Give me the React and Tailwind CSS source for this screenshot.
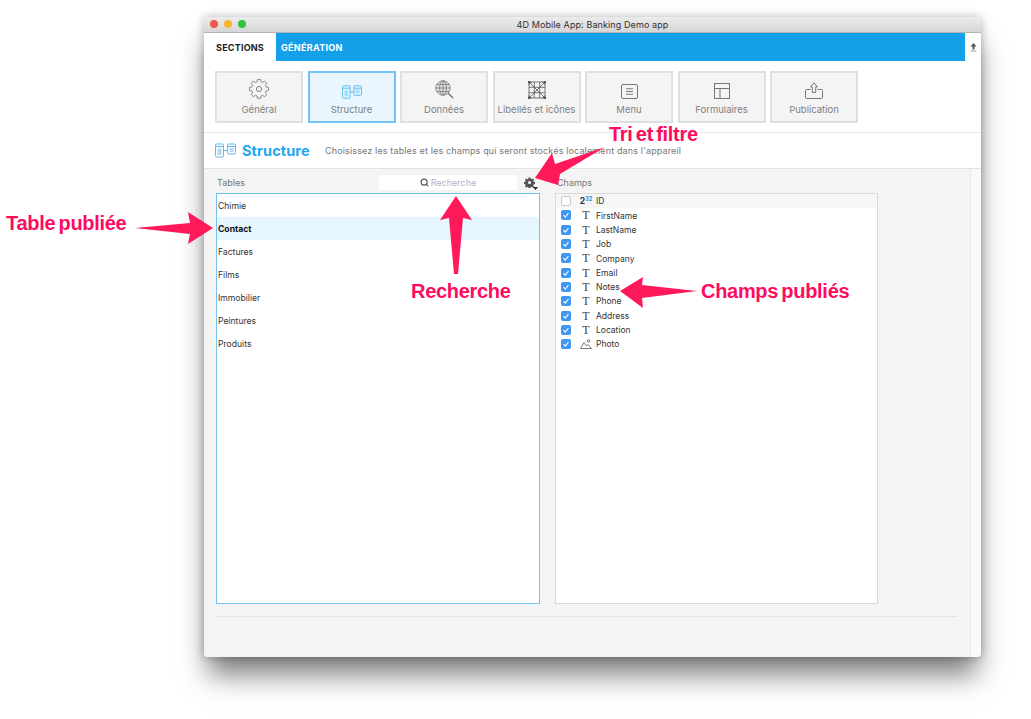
import { Search } from 'lucide-react'

const UI_FONT = 'font-["Inter","Noto_Sans",sans-serif]'

const TABLES = ['Chimie', 'Contact', 'Factures', 'Films', 'Immobilier', 'Peintures', 'Produits']
const FIELDS = ['FirstName', 'LastName', 'Job', 'Company', 'Email', 'Notes', 'Phone', 'Address', 'Location']

function GearIcon() {
  return (
    <svg width="20" height="20" viewBox="0 0 20 20" fill="none" stroke="#777" strokeWidth="0.9">
      <path d="M8.4 1h3.2l.5 2.5 1.5.7 2.2-1.4 2.2 2.3-1.4 2.1.7 1.6 2.5.5v3.2l-2.5.5-.7 1.5 1.4 2.2-2.2 2.2-2.2-1.4-1.5.7-.5 2.3H8.4l-.5-2.4-1.5-.7-2.2 1.4L2 16.7l1.4-2.2-.7-1.5L.2 12.5V9.3l2.5-.5.7-1.6L2 5.1l2.2-2.3 2.2 1.4 1.5-.7z" transform="translate(0.3 -0.6) scale(0.97)" />
      <circle cx="10" cy="10" r="2.6" />
    </svg>
  )
}

function StructureIcon({ size = 20, h = 14 }) {
  return (
    <svg width={size} height={h} viewBox="0 0 21 14" fill="none" stroke="#5cb8ee" strokeWidth="1">
      <rect x="0.5" y="0.5" width="8" height="13" rx="1.2" />
      <rect x="12.5" y="0.5" width="8" height="10" rx="1.2" />
      <path d="M.5 3h8M12.5 3h8M8.5 7h4" />
      <rect x="2.5" y="5" width="4" height="6.5" fill="#a9dcf8" stroke="none" />
      <rect x="14.5" y="4.5" width="4" height="4" fill="#a9dcf8" stroke="none" />
    </svg>
  )
}

function GlobeIcon() {
  return (
    <svg width="19" height="19" viewBox="0 0 19 19" fill="none" stroke="#777" strokeWidth="0.8">
      <circle cx="8" cy="8" r="7.2" fill="#e2e2e2" />
      <ellipse cx="8" cy="8" rx="3.4" ry="7.2" />
      <path d="M8 .8v14.4M.8 8h14.4M1.8 4.5h12.4M1.8 11.5h12.4" />
      <path d="M13 13l5 5" strokeWidth="1.4" />
    </svg>
  )
}

function LabelsIcon() {
  return (
    <svg width="18" height="18" viewBox="0 0 18 18" fill="none" stroke="#555" strokeWidth="0.8">
      <rect x="1" y="1" width="16" height="16" />
      <path d="M1 6.3h16M1 11.7h16M6.3 1v16M11.7 1v16M1 1l16 16M17 1L1 17M3.6 1L1 3.6M14.4 1L17 3.6M1 14.4L3.6 17M17 14.4L14.4 17" />
      <rect x="0" y="0" width="2" height="2" fill="#555" />
      <rect x="16" y="0" width="2" height="2" fill="#555" />
      <rect x="0" y="16" width="2" height="2" fill="#555" />
      <rect x="16" y="16" width="2" height="2" fill="#555" />
    </svg>
  )
}

function MenuIcon() {
  return (
    <svg width="17" height="15" viewBox="0 0 17 15" fill="none" stroke="#777" strokeWidth="1">
      <rect x="0.5" y="0.5" width="16" height="14" rx="1.5" />
      <path d="M5 4.8h7M5 7.5h7M5 10.2h7" />
    </svg>
  )
}

function FormsIcon() {
  return (
    <svg width="16" height="16" viewBox="0 0 16 16" fill="none" stroke="#777" strokeWidth="1">
      <rect x="0.5" y="0.5" width="15" height="15" />
      <path d="M.5 5.5h15M6 5.5v10" />
    </svg>
  )
}

function PublishIcon() {
  return (
    <svg width="18" height="17" viewBox="0 0 18 17" fill="none" stroke="#777" strokeWidth="1">
      <path d="M5.5 7.5H1.500a1 1 0 0 0-1 1v7a1 1 0 0 0 1 1h15a1 1 0 0 0 1-1v-7a1 1 0 0 0-1-1h-4" />
      <path d="M9 .8L5.500 5H7.300v5.500h3.400V5h1.800z" />
    </svg>
  )
}

const SECTIONS = [
  { label: 'Général', icon: <GearIcon /> },
  { label: 'Structure', icon: <StructureIcon />, active: true },
  { label: 'Données', icon: <GlobeIcon /> },
  { label: 'Libellés et icônes', icon: <LabelsIcon /> },
  { label: 'Menu', icon: <MenuIcon /> },
  { label: 'Formulaires', icon: <FormsIcon /> },
  { label: 'Publication', icon: <PublishIcon /> },
]

function SectionButton({ label, icon, active }) {
  return (
    <div
      className={
        active
          ? 'flex h-[52px] w-[88px] flex-col items-center border-2 border-[#74c2f5] bg-[#e9f6fe]'
          : 'flex h-[52px] w-[88px] flex-col items-center border-2 border-[#e0e0e0] bg-[#f4f4f4]'
      }
    >
      <div className="flex h-[26px] w-full items-end justify-center">{icon}</div>
      <div className="mt-[5px] text-[9.5px] leading-[11px] whitespace-nowrap text-[#808080]">{label}</div>
    </div>
  )
}

function Check({ checked }) {
  if (!checked) {
    return <div className="h-[10px] w-[10px] rounded-[2px] border border-[#c8c8c8] bg-white" />
  }
  return (
    <div className="flex h-[10px] w-[10px] items-center justify-center rounded-[2px] bg-[#3c97f5]">
      <svg width="8" height="8" viewBox="0 0 8 8" fill="none" stroke="#fff" strokeWidth="1.2">
        <path d="M1.5 4.2l1.8 1.8 3.2-4" />
      </svg>
    </div>
  )
}

function FieldRow({ name, checked = true, icon, className = '' }) {
  return (
    <div className={`flex h-[14.3px] items-center ${className}`}>
      <div className="ml-[5px] w-[10px]">
        <Check checked={checked} />
      </div>
      <div className="ml-[5px] flex w-[20px] justify-center">{icon}</div>
      <div className="pt-[1px] text-[8.5px] leading-none text-[#333]">{name}</div>
    </div>
  )
}

function PhotoIcon() {
  return (
    <svg width="12" height="10" viewBox="0 0 12 10" fill="none" stroke="#444" strokeWidth="0.7">
      <path d="M.5 9.500L4 3.500l2.500 3.500 1.500-1.500 3.500 4z" />
      <circle cx="8.500" cy="2" r="1.300" />
    </svg>
  )
}

// the pink callouts drawn on top of the window
function Arrows() {
  return (
    <svg className="pointer-events-none absolute top-0 left-0" width="1031" height="719" fill="#fe1a5a">
      <polygon points="135,228 190,223 188,212 213,228 188,244 190,234" />
      <polygon points="605,147 560,174 558,185 535,178 552,153 555,164" />
      <polygon points="456,196 472,220 463,218 458,274 454,274 449,218 440,220" />
      <polygon points="620,291 643,277 642,285 697,291 642,298 643,308" />
    </svg>
  )
}

function Callout({ className, children }) {
  return (
    <div className={`absolute font-["Liberation_Sans",sans-serif] text-[20px] leading-[22px] font-bold tracking-[-0.3px] whitespace-nowrap text-[#fe0a5e] [word-spacing:-2px] ${className}`}>
      {children}
    </div>
  )
}

export default function App() {
  return (
    <div className={`relative h-[719px] w-[1031px] overflow-hidden bg-white pt-[17px] pl-[204px] ${UI_FONT}`}>
      <div className="flex h-[640px] w-[777px] flex-col overflow-hidden rounded-[4px] bg-white shadow-[0_22px_26px_-4px_rgba(0,0,0,0.5),0_0_10px_rgba(0,0,0,0.28)]">
        <div className="relative flex h-[16px] shrink-0 items-center justify-center border-b border-[#b4b4b4] bg-gradient-to-b from-[#ececec] to-[#d6d6d6] text-[9px] tracking-[0.1px] text-[#333]">
          <div className="absolute top-[3px] left-[6px] flex gap-[6px]">
            <div className="h-[8px] w-[8px] rounded-full bg-[#f0564c]" />
            <div className="h-[8px] w-[8px] rounded-full bg-[#f6b72d]" />
            <div className="h-[8px] w-[8px] rounded-full bg-[#2fc23f]" />
          </div>
          4D Mobile App: Banking Demo app
        </div>

        <div className="flex h-[28px] shrink-0">
          <div className="flex w-[72px] items-center justify-center pt-[1px] text-[9px] font-bold tracking-[0.2px] text-[#222]">SECTIONS</div>
          <div className="flex w-[689px] items-center bg-[#149fe9] pt-[1px] pl-[5px] text-[9px] font-bold tracking-[0.3px] text-white">GÉNÉRATION</div>
          <div className="flex flex-1 items-center justify-center">
            <svg width="7" height="9" viewBox="0 0 7 9" fill="#555">
              <path d="M3.500 0L6.500 3.500H4.500V6.500H2.500V3.500H.5z" />
              <rect x="0.5" y="7.500" width="6" height="1" fill="#999" />
            </svg>
          </div>
        </div>

        <div className="flex h-[72px] shrink-0 gap-[4.5px] border-b border-[#e8e8e8] pt-[10px] pl-[11px]">
          {SECTIONS.map((section) => (
            <SectionButton key={section.label} {...section} />
          ))}
        </div>

        <div className="flex h-[36px] shrink-0 items-center border-b border-[#e2e2e2] pl-[11px]">
          <StructureIcon size={21} h={15} />
          <div className="ml-[6px] w-[83px] text-[14.5px] font-bold tracking-[0.1px] text-[#1ea7f2]">Structure</div>
          <div className="text-[9px] tracking-[0.14px] text-[#777]">Choisissez les tables et les champs qui seront stockés localement dans l'appareil</div>
        </div>

        <div className="flex flex-1 bg-[#f4f4f4]">
          <div className="w-[766px] pl-[12px]">
            <div className="flex h-[24px] items-end pb-[3px]">
              <div className="flex w-[324px] items-center justify-between">
                <div className="pl-[1px] text-[9px] leading-[14px] text-[#777]">Tables</div>
                <div className="flex items-center">
                  <div className="flex h-[15px] w-[138px] items-center justify-center gap-[2px] rounded-[3px] bg-white text-[9px] text-[#b5aec6]">
                    <Search size={9} strokeWidth={3} color="#555" />
                    Recherche
                  </div>
                  <div className="relative mr-[2px] ml-[7px] h-[14px] w-[14px] pt-[1px]">
                    <svg width="11" height="11" viewBox="0 0 24 24" fill="#555">
                      <path d="M10 1h4l.6 3 2 .9 2.600-1.700 2.800 2.800-1.700 2.600.9 2 3 .6v4l-3 .6-.9 2 1.700 2.600-2.800 2.800-2.600-1.700-2 .9-.6 3h-4l-.6-3-2-.9-2.600 1.700-2.800-2.800 1.700-2.600-.9-2-3-.6v-4l3-.6.9-2-1.700-2.600L4.800 3.200l2.600 1.700 2-.9zM12 8.500a3.500 3.500 0 1 0 0 7 3.500 3.500 0 0 0 0-7z" fillRule="evenodd" />
                    </svg>
                    <svg className="absolute right-0 bottom-0" width="5" height="3" viewBox="0 0 5 3" fill="#222">
                      <path d="M0 0h5L2.500 3z" />
                    </svg>
                  </div>
                </div>
              </div>
              <div className="ml-[17px] text-[9px] leading-[14px] text-[#777]">Champs</div>
            </div>

            <div className="flex h-[411px] gap-[15px]">
              <div className="w-[324px] border border-[#74c2f5] bg-white">
                {TABLES.map((name) => (
                  <div
                    key={name}
                    className={
                      name === 'Contact'
                        ? 'flex h-[23px] items-center bg-[#e6f6fe] pt-[1px] pl-[1px] text-[8.6px] font-bold text-[#111]'
                        : 'flex h-[23px] items-center pt-[1px] pl-[1px] text-[8.6px] text-[#333]'
                    }
                  >
                    {name}
                  </div>
                ))}
              </div>

              <div className="w-[323px] border border-[#d8d8d8] bg-white">
                <FieldRow
                  name="ID"
                  checked={false}
                  className="bg-[#f6f6f6]"
                  icon={
                    <span className="text-[8.6px] leading-none font-bold text-[#333]">
                      2<sup className="text-[5.5px] text-[#2a8fd0]">32</sup>
                    </span>
                  }
                />
                {FIELDS.map((name) => (
                  <FieldRow
                    key={name}
                    name={name}
                    icon={<span className="font-['Liberation_Serif',serif] text-[12px] leading-none text-[#444]">T</span>}
                  />
                ))}
                <FieldRow name="Photo" icon={<PhotoIcon />} />
              </div>
            </div>

            <div className="mt-[12px] h-[1px] w-[741px] bg-[#e4e4e4]" />
          </div>
          <div className="flex-1 border-l border-[#ebebeb] bg-[#f9f9f9]" />
        </div>
      </div>

      <Arrows />
      <Callout className="top-[212px] left-[6px]">Table publiée</Callout>
      <Callout className="top-[123px] left-[609px]">Tri et filtre</Callout>
      <Callout className="top-[280px] left-[411px]">Recherche</Callout>
      <Callout className="top-[280px] left-[701px]">Champs publiés</Callout>
    </div>
  )
}
